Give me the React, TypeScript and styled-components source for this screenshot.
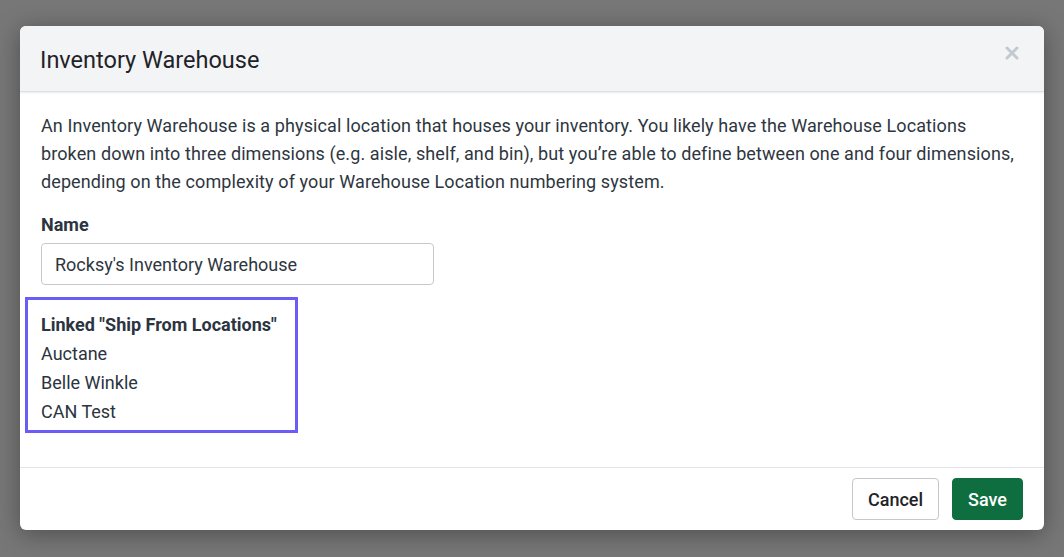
import React from "react";
import styled, { createGlobalStyle } from "styled-components";

const Global = createGlobalStyle`
  html, body { margin: 0; padding: 0; background: #767676; }
  body { font-family: Roboto, "Noto Sans", Arial, sans-serif; color: #2b3440; }
`;

const Backdrop = styled.div`
  width: 1064px; height: 557px; box-sizing: border-box;
  padding: 26px 20px 0 20px;
  background: #777;
`;

const Modal = styled.div`
  width: 1024px; height: 504px; background: #fff; border-radius: 6px;
  box-shadow: 0 4px 24px rgba(0,0,0,0.35);
  display: flex; flex-direction: column; overflow: hidden;
`;

const Header = styled.div`
  height: 66px; box-sizing: border-box; background: #f3f4f6;
  border-bottom: 1px solid #dcdfe3; box-shadow: 0 1px 2px rgba(0,0,0,0.08);
  display: flex; align-items: center; justify-content: space-between;
  padding: 0 25px 0 20px;
`;

const Title = styled.h1`
  margin: 0; font-size: 23.5px; font-weight: 400; color: #1f2328; padding-top: 3px;
`;

const Close = styled.button`
  border: 0; background: none; padding: 0; cursor: pointer; display: flex;
  margin-top: -12px;
`;

const Body = styled.div`
  flex: 1; padding: 20px 21px 0 21px;
`;

const Para = styled.p`
  margin: 0; font-size: 18px; line-height: 28px; color: #2e3641; letter-spacing: 0.1px;
`;

const Label = styled.div`
  font-size: 18px; font-weight: 700; margin-top: 17px; line-height: 24px; color: #2b3440;
`;

const Input = styled.input`
  display: block; width: 393px; height: 42px; box-sizing: border-box; margin-top: 6px;
  border: 1px solid #c4c8cd; border-radius: 4px; padding: 0 13px;
  font-family: inherit; font-size: 18px; color: #2e3641;
`;

const Highlight = styled.div`
  margin: 12px 0 0 -16px; width: 273px; height: 136px; box-sizing: border-box;
  border: 3px solid #6c5cf7; padding: 10px 0 0 13px;
`;

const Item = styled.div<{ $bold?: boolean }>`
  font-size: 18px; line-height: 29px; font-weight: ${p => (p.$bold ? 700 : 400)};
  color: #2b3440;
`;

const Footer = styled.div`
  height: 63px; border-top: 1px solid #e3e5e8; display: flex; justify-content: flex-end;
  align-items: center; gap: 13px; padding: 0 21px; box-sizing: border-box;
`;

const Btn = styled.button<{ $primary?: boolean }>`
  height: 42px; border-radius: 4px; font-family: inherit; font-size: 18px; font-weight: 500;
  padding: 0 15px;
  background: ${p => (p.$primary ? "#0f6e3f" : "#fff")};
  color: ${p => (p.$primary ? "#fff" : "#1f2328")};
  border: 1px solid ${p => (p.$primary ? "#0f6e3f" : "#c4c8cd")};
`;

export default function App() {
  return (
    <>
      <Global />
      <Backdrop>
        <Modal>
          <Header>
            <Title>Inventory Warehouse</Title>
            <Close aria-label="Close">
              <svg width="14" height="14" viewBox="0 0 14 14">
                <path d="M2 2L12 12M12 2L2 12" stroke="#c3c9d0" strokeWidth="3" strokeLinecap="round" />
              </svg>
            </Close>
          </Header>
          <Body>
            <Para>
              An Inventory Warehouse is a physical location that houses your inventory. You likely have the Warehouse Locations broken down into three dimensions (e.g. aisle, shelf, and bin), but you’re able to define between one and four dimensions, depending on the complexity of your Warehouse Location numbering system.
            </Para>
            <Label>Name</Label>
            <Input defaultValue="Rocksy's Inventory Warehouse" />
            <Highlight>
              <Item $bold>Linked "Ship From Locations"</Item>
              <Item>Auctane</Item>
              <Item>Belle Winkle</Item>
              <Item>CAN Test</Item>
            </Highlight>
          </Body>
          <Footer>
            <Btn>Cancel</Btn>
            <Btn $primary>Save</Btn>
          </Footer>
        </Modal>
      </Backdrop>
    </>
  );
}
